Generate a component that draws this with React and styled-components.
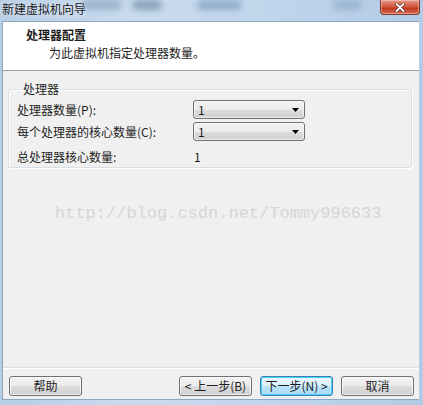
import React from "react";
import styled, { createGlobalStyle } from "styled-components";

const Global = createGlobalStyle`
  html, body { margin: 0; padding: 0; }
  body { width: 423px; height: 405px; overflow: hidden; font-family: "Noto Sans CJK SC", "Noto Sans", sans-serif; font-size: 12px; color: #1e1e1e; }
`;

const Win = styled.div`
  width: 423px;
  height: 405px;
  box-sizing: border-box;
  display: flex;
  flex-direction: column;
  background: linear-gradient(90deg, #b6cde6 0%, #c9dbee 30%, #c2d6ec 60%, #b3cbe6 100%);
  padding: 0 4px 5px 2px;
`;

const TitleBar = styled.div`
  height: 21px;
  display: flex;
  align-items: flex-start;
  justify-content: space-between;
  position: relative;
`;

const Title = styled.div`
  font-size: 12px;
  line-height: 12px;
  margin-top: 3px;
  color: #1a1a1a;
  text-shadow: 0 0 6px rgba(255,255,255,0.9);
`;

const Blur = styled.div`
  position: absolute;
  top: 0;
  height: 10px;
  border-radius: 5px;
  filter: blur(3px);
  background: ${p => p.$c};
  opacity: 0.5;
`;

const CloseBtn = styled.div`
  width: 38px;
  height: 14px;
  margin-right: -1px;
  border: 1px solid #7a3a30;
  border-top: none;
  border-radius: 0 0 4px 4px;
  background: linear-gradient(#e89a88 0%, #d15a42 45%, #c23a22 60%, #d86a50 100%);
  display: flex;
  align-items: center;
  justify-content: center;
  box-shadow: inset 0 0 0 1px rgba(255,255,255,0.35);
  position: relative;
  z-index: 1;
`;

const Client = styled.div`
  flex: 1;
  display: flex;
  flex-direction: column;
  background: #f0f0f0;
  border: 1px solid #8fa6c0;
  border-right: none;
`;

const Header = styled.div`
  height: 49px;
  background: #fff;
  border-bottom: 1px solid #a0a0a0;
  padding: 5px 0 0 23px;
  box-sizing: border-box;
`;

const HeadTitle = styled.div`
  font-weight: bold;
  font-size: 12px;
  line-height: 16px;
`;

const HeadSub = styled.div`
  margin: 2px 0 0 23px;
  font-size: 12px;
  line-height: 16px;
`;

const Body = styled.div`
  flex: 1;
  padding: 11px 7px 0 5px;
  position: relative;
`;

const Group = styled.fieldset`
  margin: 0;
  padding: 3px 6px 6px 8px;
  height: 86px;
  box-sizing: border-box;
  border: 1px solid #d5dfe5;
  border-radius: 3px;
  box-shadow: inset 1px 1px 0 #fff, 1px 1px 0 #fff;
`;

const Legend = styled.legend`
  padding: 0 1px;
  margin-left: 5px;
  font-size: 12px;
  line-height: 14px;
`;

const Row = styled.div`
  display: grid;
  grid-template-columns: 176px 112px;
  align-items: center;
  height: ${p => p.$h || 21}px;
`;

const Label = styled.div`
  font-size: 12px;
`;

const Combo = styled.div`
  height: 19px;
  box-sizing: border-box;
  border: 1px solid #707070;
  border-radius: 3px;
  background: linear-gradient(#f2f2f2 0%, #ebebeb 50%, #dddddd 51%, #cfcfcf 100%);
  display: flex;
  align-items: center;
  justify-content: space-between;
  padding: 0 5px 0 4px;
  font-size: 12px;
  box-shadow: inset 0 0 0 1px rgba(255,255,255,0.6);
`;

const Value = styled.div`
  padding-left: 1px;
  font-size: 12px;
`;

const Watermark = styled.div`
  position: absolute;
  left: 52px;
  top: 133px;
  font-family: "Liberation Mono", "DejaVu Sans Mono", monospace;
  font-size: 17px;
  color: #d6d6d6;
  white-space: nowrap;
`;

const Footer = styled.div`
  height: 31px;
  border-top: 1px solid #dfdfdf;
  box-shadow: inset 0 1px 0 #fff;
  display: flex;
  align-items: center;
  padding: 0 5px 0 6px;
  gap: 8px;
`;

const Spacer = styled.div`
  flex: 1;
`;

const Btn = styled.button`
  width: 73px;
  height: 20px;
  margin-top: 4px;
  box-sizing: border-box;
  border: 1px solid ${p => (p.$focus ? "#3c7fb1" : "#707070")};
  border-radius: 3px;
  background: ${p =>
    p.$focus
      ? "linear-gradient(#eaf6fd 0%, #d9f0fc 50%, #bee6fd 51%, #a7d9f5 100%)"
      : "linear-gradient(#f2f2f2 0%, #ebebeb 50%, #dddddd 51%, #cfcfcf 100%)"};
  box-shadow: inset 0 0 0 1px ${p => (p.$focus ? "#48d1fa" : "rgba(255,255,255,0.7)")};
  font-family: "Noto Sans CJK SC", "Noto Sans", sans-serif;
  font-size: 12px;
  line-height: 16px;
  color: #1e1e1e;
  padding: 0;
`;

const Arrow = () => (
  <svg width="7" height="4" viewBox="0 0 7 4"><path d="M0 0 H7 L3.5 4 Z" fill="#000" /></svg>
);

export default function App() {
  return (
    <>
      <Global />
      <Win>
        <TitleBar>
          <Blur $c="#6f8fb0" style={{ left: 80, width: 40 }} />
          <Blur $c="#4c6c8c" style={{ left: 130, width: 30 }} />
          <Blur $c="#5f87a8" style={{ left: 195, width: 45 }} />
          <Blur $c="#7c9cbc" style={{ left: 330, width: 30 }} />
          <Title>新建虚拟机向导</Title>
          <CloseBtn>
            <svg width="10" height="9" viewBox="0 0 10 9">
              <path d="M1.5 1 L8.5 8 M8.5 1 L1.5 8" stroke="#3a1a10" strokeWidth="3" strokeLinecap="round" />
              <path d="M1.5 1 L8.5 8 M8.5 1 L1.5 8" stroke="#ffffff" strokeWidth="1.8" strokeLinecap="round" />
            </svg>
          </CloseBtn>
        </TitleBar>
        <Client>
          <Header>
            <HeadTitle>处理器配置</HeadTitle>
            <HeadSub>为此虚拟机指定处理器数量。</HeadSub>
          </Header>
          <Body>
            <Group>
              <Legend>处理器</Legend>
              <Row $h={21}>
                <Label>处理器数量(P):</Label>
                <Combo>
                  <span>1</span>
                  <Arrow />
                </Combo>
              </Row>
              <Row $h={23}>
                <Label>每个处理器的核心数量(C):</Label>
                <Combo>
                  <span>1</span>
                  <Arrow />
                </Combo>
              </Row>
              <Row $h={27}>
                <Label>总处理器核心数量:</Label>
                <Value>1</Value>
              </Row>
            </Group>
            <Watermark>http://blog.csdn.net/Tommy996633</Watermark>
          </Body>
          <Footer>
            <Btn>帮助</Btn>
            <Spacer />
            <Btn>&lt; 上一步(B)</Btn>
            <Btn $focus>下一步(N) &gt;</Btn>
            <Btn>取消</Btn>
          </Footer>
        </Client>
      </Win>
    </>
  );
}
